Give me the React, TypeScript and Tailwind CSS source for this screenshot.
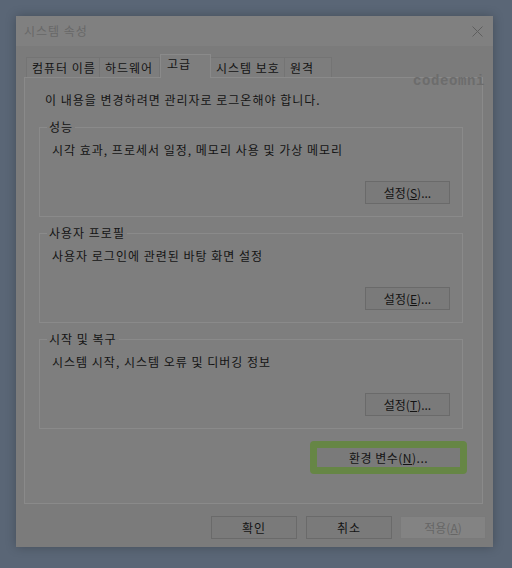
import React from "react";

const font = { fontFamily: '"Noto Sans CJK KR", "Noto Sans", sans-serif' };

function Btn({ children, disabled, className = "" }: { children: React.ReactNode; disabled?: boolean; className?: string }) {
  return (
    <div
      className={
        "h-[23px] flex items-center justify-center text-[12px] leading-[16px] border " +
        (disabled
          ? "border-[#7a7a7a] bg-[#838383] text-[#666666] "
          : "border-[#6a6a6a] bg-[#7a7a7a] text-[#141414] ") +
        className
      }
    >
      {children}
    </div>
  );
}

function Group({ label, desc, btn }: { label: string; desc: string; btn: React.ReactNode }) {
  return (
    <div className="relative h-[90px] border border-[#8a8a8a] flex flex-col justify-between pl-[12px] pt-[14px] pr-[12px] pb-[12px]">
      <div className="absolute -top-[9px] left-[7px] px-[2px] bg-[#7e7e7e] text-[12px] leading-[16px] tracking-[1px] text-[#141414]">
        {label}
      </div>
      <div className="text-[12px] leading-[16px] tracking-[1px] text-[#141414]">{desc}</div>
      <div className="flex justify-end">
        <Btn className="w-[85px]">{btn}</Btn>
      </div>
    </div>
  );
}

function Tab({ label, w, active }: { label: string; w: number; active?: boolean }) {
  if (active) {
    return (
      <div
        className="relative z-10 h-[24px] -mb-px border border-b-0 border-[#8a8a8a] bg-[#7e7e7e] text-[12px] leading-[16px] tracking-[1px] text-[#141414] pl-[6px] pt-[1px]"
        style={{ width: w }}
      >
        {label}
      </div>
    );
  }
  return (
    <div
      className="h-[20px] border border-b-0 border-l-0 first:border-l border-[#747474] bg-[#7d7d7d] text-[12px] leading-[16px] tracking-[1px] text-[#141414] pl-[5px] pt-[2px]"
      style={{ width: w }}
    >
      {label}
    </div>
  );
}

export default function App() {
  return (
    <div className="w-[512px] h-[568px] bg-[#5a6676] pl-4 pt-4 overflow-hidden" style={font}>
      <div className="relative w-[477px] h-[531px] bg-[#7b7b7b] shadow-[0_0_10px_rgba(0,0,0,0.25)] flex flex-col">
        <div className="h-[30px] bg-[#808080] flex items-center justify-between pl-2 pr-[10px]">
          <span className="text-[12px] leading-[16px] tracking-[1px] text-[#686868]">시스템 속성</span>
          <svg width="11" height="11" viewBox="0 0 11 11">
            <path d="M0.5 0.5 L10.5 10.5 M10.5 0.5 L0.5 10.5" stroke="#5e5e5e" strokeWidth="1" fill="none" />
          </svg>
        </div>
        <div className="flex items-end pl-[10px] mt-[8px]">
          <Tab label="컴퓨터 이름" w={74} />
          <Tab label="하드웨어" w={60} />
          <Tab label="고급" w={51} active />
          <Tab label="시스템 보호" w={74} />
          <Tab label="원격" w={47} />
        </div>
        <div className="ml-2 w-[459px] h-[427px] border border-[#8a8a8a] bg-[#7e7e7e] flex flex-col">
          <div className="pl-[20px] pt-[14px] text-[12px] leading-[16px] tracking-[1px] text-[#141414]">
            이 내용을 변경하려면 관리자로 로그온해야 합니다.
          </div>
          <div className="ml-[14px] w-[424px] mt-[19px] flex flex-col gap-4">
            <Group
              label="성능"
              desc="시각 효과, 프로세서 일정, 메모리 사용 및 가상 메모리"
              btn={<span>설정(<span className="underline">S</span>)...</span>}
            />
            <Group
              label="사용자 프로필"
              desc="사용자 로그인에 관련된 바탕 화면 설정"
              btn={<span>설정(<span className="underline">E</span>)...</span>}
            />
            <Group
              label="시작 및 복구"
              desc="시스템 시작, 시스템 오류 및 디버깅 정보"
              btn={<span>설정(<span className="underline">T</span>)...</span>}
            />
          </div>
          <div className="flex justify-end pr-[15px] mt-[12px]">
            <div className="w-[157px] h-[33px] rounded-[4px] border-[7px] border-[#668645] bg-[#7a7a7a] flex items-center justify-center text-[12px] leading-[16px] tracking-[0.5px] text-[#141414]">
              <span>
                환경 변수(<span className="underline">N</span>)...
              </span>
            </div>
          </div>
        </div>
        <div className="flex justify-end pr-[7px] mt-[12px]">
          <Btn className="w-[86px] tracking-[1px]">확인</Btn>
          <Btn className="w-[86px] ml-[9px] tracking-[1px]">취소</Btn>
          <Btn disabled className="w-[86px] ml-2">
            <span>
              적용(<span className="underline">A</span>)
            </span>
          </Btn>
        </div>
        <div
          className="absolute left-[397px] top-[57px] text-[14px] leading-[16px] font-bold tracking-[0.6px] text-[#6c6c6c]"
          style={{ fontFamily: '"Liberation Mono", "DejaVu Sans Mono", monospace' }}
        >
          codeomni
        </div>
      </div>
    </div>
  );
}
